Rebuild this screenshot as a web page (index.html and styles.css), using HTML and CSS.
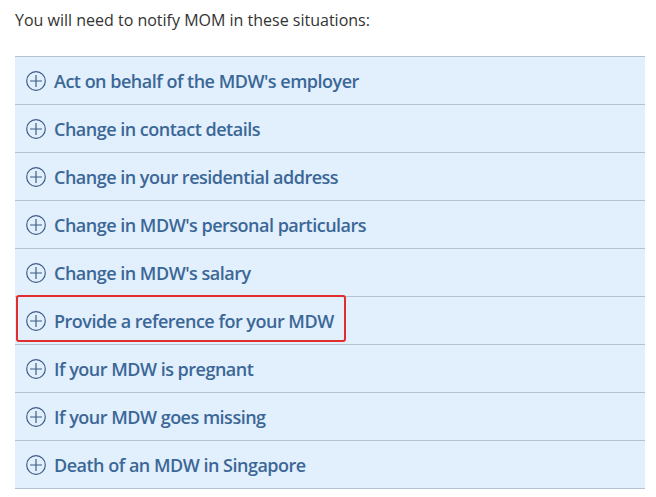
FILE: index.html
```html
<!DOCTYPE html>
<html>
<head>
<meta charset="utf-8">
<link rel="stylesheet" href="styles.css">
</head>
<body>
<p class="intro">You will need to notify MOM in these situations:</p>
<ul class="acc">
  <li class="row"><span class="ic"><svg viewBox="0 0 20 20" width="20" height="20"><circle cx="10" cy="10" r="9.3" fill="none" stroke="#3d5f86" stroke-width="1.2"/><path d="M10 4v12M4 10h12" stroke="#3d5f86" stroke-width="1.2"/></svg></span>Act on behalf of the MDW's employer</li>
  <li class="row"><span class="ic"><svg viewBox="0 0 20 20" width="20" height="20"><circle cx="10" cy="10" r="9.3" fill="none" stroke="#3d5f86" stroke-width="1.2"/><path d="M10 4v12M4 10h12" stroke="#3d5f86" stroke-width="1.2"/></svg></span>Change in contact details</li>
  <li class="row"><span class="ic"><svg viewBox="0 0 20 20" width="20" height="20"><circle cx="10" cy="10" r="9.3" fill="none" stroke="#3d5f86" stroke-width="1.2"/><path d="M10 4v12M4 10h12" stroke="#3d5f86" stroke-width="1.2"/></svg></span>Change in your residential address</li>
  <li class="row"><span class="ic"><svg viewBox="0 0 20 20" width="20" height="20"><circle cx="10" cy="10" r="9.3" fill="none" stroke="#3d5f86" stroke-width="1.2"/><path d="M10 4v12M4 10h12" stroke="#3d5f86" stroke-width="1.2"/></svg></span>Change in MDW's personal particulars</li>
  <li class="row"><span class="ic"><svg viewBox="0 0 20 20" width="20" height="20"><circle cx="10" cy="10" r="9.3" fill="none" stroke="#3d5f86" stroke-width="1.2"/><path d="M10 4v12M4 10h12" stroke="#3d5f86" stroke-width="1.2"/></svg></span>Change in MDW's salary</li>
  <li class="row"><span class="ic"><svg viewBox="0 0 20 20" width="20" height="20"><circle cx="10" cy="10" r="9.3" fill="none" stroke="#3d5f86" stroke-width="1.2"/><path d="M10 4v12M4 10h12" stroke="#3d5f86" stroke-width="1.2"/></svg></span>Provide a reference for your MDW<span class="mark"></span></li>
  <li class="row"><span class="ic"><svg viewBox="0 0 20 20" width="20" height="20"><circle cx="10" cy="10" r="9.3" fill="none" stroke="#3d5f86" stroke-width="1.2"/><path d="M10 4v12M4 10h12" stroke="#3d5f86" stroke-width="1.2"/></svg></span>If your MDW is pregnant</li>
  <li class="row"><span class="ic"><svg viewBox="0 0 20 20" width="20" height="20"><circle cx="10" cy="10" r="9.3" fill="none" stroke="#3d5f86" stroke-width="1.2"/><path d="M10 4v12M4 10h12" stroke="#3d5f86" stroke-width="1.2"/></svg></span>If your MDW goes missing</li>
  <li class="row"><span class="ic"><svg viewBox="0 0 20 20" width="20" height="20"><circle cx="10" cy="10" r="9.3" fill="none" stroke="#3d5f86" stroke-width="1.2"/><path d="M10 4v12M4 10h12" stroke="#3d5f86" stroke-width="1.2"/></svg></span>Death of an MDW in Singapore</li>
</ul>
</body>
</html>
```
FILE: styles.css
```css
html, body {
  margin: 0;
  padding: 0;
  background: #ffffff;
}
body {
  font-family: "Open Sans", "Liberation Sans", sans-serif;
  padding: 0 11px 0 15px;
}
.intro {
  margin: 0;
  padding-top: 8px;
  height: 56px;
  box-sizing: border-box;
  font-size: 16px;
  line-height: 24px;
  color: #333333;
}
.acc {
  list-style: none;
  margin: 0;
  padding: 0;
  border-top: 1px solid #b3c3d1;
}
.row {
  position: relative;
  display: flex;
  align-items: center;
  height: 47px;
  border-bottom: 1px solid #b3c3d1;
  background: #e2effd;
  padding-left: 11px;
  font-size: 18px;
  font-weight: 600;
  letter-spacing: -0.5px;
  color: #3b6796;
}
.ic {
  display: flex;
  width: 20px;
  height: 20px;
  margin-right: 8px;
}
.mark {
  position: absolute;
  left: 1px;
  top: -2px;
  width: 326px;
  height: 43px;
  border: 2px solid #e02d2d;
  border-radius: 3px;
}
```
